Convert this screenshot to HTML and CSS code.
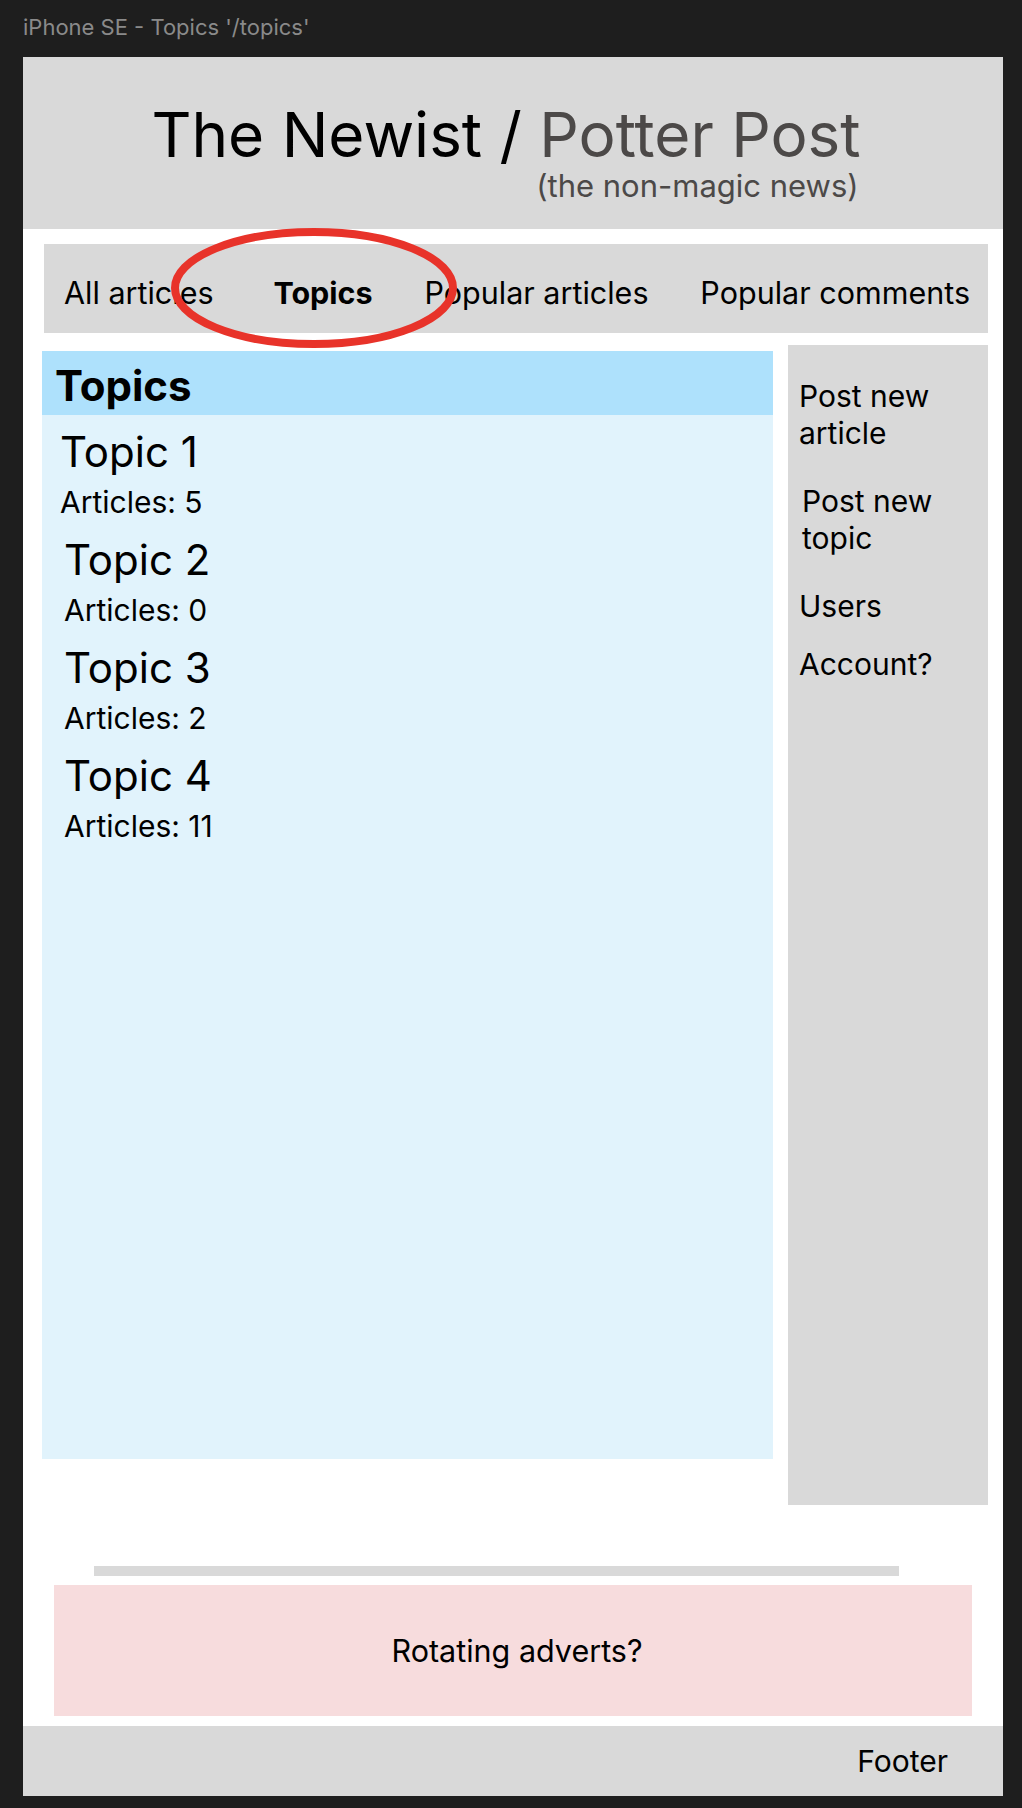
FILE: index.html
```html
<!DOCTYPE html>
<html lang="en">
<head>
    <meta charset="UTF-8">
    <meta name="viewport" content="width=device-width, initial-scale=1.0">
    <title>iPhone SE - Topics '/topics'</title>
    <link rel="stylesheet" href="styles.css">
</head>
<body>
    <div class="frame-label">iPhone SE - Topics '/topics'</div>

    <div class="frame">
        <header class="masthead">
            <div class="brand">
                <div class="brand-title">The Newist / <span class="brand-name">Potter Post</span></div>
                <div class="brand-tagline">(the non-magic news)</div>
            </div>
        </header>

        <nav class="main-nav">
            <a href="#">All articles</a>
            <a href="#" class="active">Topics</a>
            <a href="#">Popular articles</a>
            <a href="#">Popular comments</a>
            <!-- annotation: marks the current page -->
            <svg class="highlight" width="296" height="128" viewBox="0 0 296 128">
                <ellipse cx="148" cy="64" rx="139" ry="56" fill="none" stroke="#e8332a" stroke-width="8"/>
            </svg>
        </nav>

        <div class="content">
            <section class="topics">
                <h2>Topics</h2>
                <ul class="topic-list">
                    <li class="topic">
                        <div class="topic-name">Topic 1</div>
                        <div class="topic-count">Articles: 5</div>
                    </li>
                    <li class="topic">
                        <div class="topic-name">Topic 2</div>
                        <div class="topic-count">Articles: 0</div>
                    </li>
                    <li class="topic">
                        <div class="topic-name">Topic 3</div>
                        <div class="topic-count">Articles: 2</div>
                    </li>
                    <li class="topic">
                        <div class="topic-name">Topic 4</div>
                        <div class="topic-count">Articles: 11</div>
                    </li>
                </ul>
            </section>

            <aside class="sidebar">
                <a href="#">Post new<br>article</a>
                <a href="#" class="nudge">Post new<br>topic</a>
                <a href="#">Users</a>
                <a href="#" class="tight">Account?</a>
            </aside>
        </div>

        <div class="divider"></div>

        <div class="adverts">Rotating adverts?</div>

        <footer class="footer">Footer</footer>
    </div>
</body>
</html>
```

FILE: styles.css
```css
body {
    margin: 0;
    background-color: #1e1e1e;
    font-family: Inter, "Noto Sans", sans-serif;
    color: #000;
}
a {
    color: inherit;
    text-decoration: none;
}
.frame-label {
    height: 57px;
    box-sizing: border-box;
    padding: 14px 0 0 23px;
    font-size: 22px;
    line-height: 26px;
    color: #8a8a8a;
}
.frame {
    width: 980px;
    margin-left: 23px;
    background-color: #fff;
    display: flex;
    flex-direction: column;
}
.masthead {
    height: 172px;
    box-sizing: border-box;
    padding: 43px 14px 0 0;
    background-color: #d9d9d9;
    display: flex;
    justify-content: center;
}
.brand {
    display: flex;
    flex-direction: column;
    align-items: flex-end;
}
.brand-title {
    font-size: 62px;
    line-height: 70px;
}
.brand-name,
.brand-tagline {
    color: #4c4948;
}
.brand-tagline {
    font-size: 31px;
    line-height: 32px;
    margin-right: 2px;
}
.main-nav {
    position: relative;
    margin: 15px 15px 0 21px;
    height: 89px;
    box-sizing: border-box;
    padding: 8px 18px 0 20px;
    background-color: #d9d9d9;
    display: flex;
    align-items: center;
    justify-content: space-between;
    font-size: 30.5px;
}
.main-nav .active {
    font-weight: bold;
    margin-left: 8px;
}
.main-nav .highlight {
    position: absolute;
    left: 122px;
    top: -20px;
    pointer-events: none;
}
.content {
    margin-top: 12px;
    display: flex;
    align-items: flex-start;
}
.topics {
    margin: 6px 0 0 19px;
    width: 731px;
    height: 1108px;
    background-color: #e1f3fc;
}
.topics h2 {
    margin: 0;
    height: 64px;
    box-sizing: border-box;
    padding: 6px 0 0 13px;
    background-color: #aee1fc;
    font-size: 42px;
    line-height: 58px;
}
.topic-list {
    list-style: none;
    margin: 0;
    padding: 13px 0 0 18px;
    display: flex;
    flex-direction: column;
    gap: 16px;
}
.topic + .topic {
    padding-left: 4px;
}
.topic-name {
    font-size: 42px;
    line-height: 48px;
}
.topic-count {
    margin-top: 8px;
    font-size: 30px;
    line-height: 36px;
}
.sidebar {
    margin-left: 15px;
    width: 200px;
    height: 1160px;
    box-sizing: border-box;
    padding: 33px 0 0 11px;
    background-color: #d9d9d9;
    display: flex;
    flex-direction: column;
    gap: 31px;
    font-size: 30px;
    line-height: 37px;
}
.sidebar .nudge {
    padding-left: 3px;
}
.sidebar .tight {
    margin-top: -10px;
}
.divider {
    margin: 61px 0 0 71px;
    width: 805px;
    height: 10px;
    background-color: #d9d9d9;
}
.adverts {
    margin: 9px 0 0 31px;
    width: 918px;
    height: 131px;
    box-sizing: border-box;
    padding-left: 8px;
    background-color: #f7dcdd;
    display: flex;
    align-items: center;
    justify-content: center;
    font-size: 30.5px;
}
.footer {
    margin-top: 10px;
    height: 70px;
    box-sizing: border-box;
    padding-right: 55px;
    background-color: #d9d9d9;
    display: flex;
    align-items: center;
    justify-content: flex-end;
    font-size: 30px;
}
```
